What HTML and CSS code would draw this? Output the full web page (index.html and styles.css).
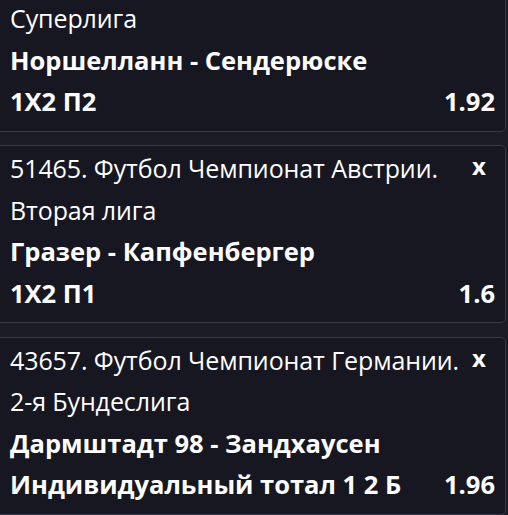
FILE: index.html
```html
<!DOCTYPE html>
<html lang="ru">
<head>
<meta charset="utf-8">
<link rel="stylesheet" href="styles.css">
</head>
<body>
<div class="list">
  <div class="card card-first">
    <div class="head"><div class="title">Суперлига</div></div>
    <div class="line bold">Норшелланн - Сендерюске</div>
    <div class="line bold row"><span>1X2 П2</span><span class="odd">1.92</span></div>
  </div>
  <div class="card">
    <div class="head"><div class="title">51465. Футбол Чемпионат Австрии. Вторая лига</div><span class="close">x</span></div>
    <div class="line bold">Гразер - Капфенбергер</div>
    <div class="line bold row"><span>1X2 П1</span><span class="odd">1.6</span></div>
  </div>
  <div class="card">
    <div class="head"><div class="title">43657. Футбол Чемпионат Германии. 2-я Бундеслига</div><span class="close">x</span></div>
    <div class="line bold">Дармштадт 98 - Зандхаусен</div>
    <div class="line bold row"><span>Индивидуальный тотал 1 2 Б</span><span class="odd">1.96</span></div>
  </div>
</div>
</body>
</html>
```

FILE: styles.css
```css
html, body {
  margin: 0;
  padding: 0;
  background: #1b1c26;
  height: 100%;
  overflow: hidden;
}
body {
  font-family: "Open Sans", "Noto Sans", sans-serif;
  color: #ffffff;
  font-size: 25px;
  line-height: 41.5px;
}
.list {
  display: flex;
  flex-direction: column;
  gap: 13.5px;
  margin-top: -5px;
  margin-left: -6px;
  width: 512px;
}
.card {
  background: #161720;
  border: 1px solid #363846;
  border-radius: 5px;
  padding: 2px 10px 8px 15px;
}
.head {
  display: flex;
  align-items: flex-start;
}
.title {
  flex: 1;
  font-weight: 400;
  letter-spacing: -0.1px;
}
.close {
  width: 23px;
  flex: none;
  font-weight: 700;
  font-size: 24px;
  line-height: 36px;
  text-align: left;
}
.bold {
  font-weight: 700;
  font-size: 25.5px;
}
.row {
  display: flex;
  justify-content: space-between;
}
```
